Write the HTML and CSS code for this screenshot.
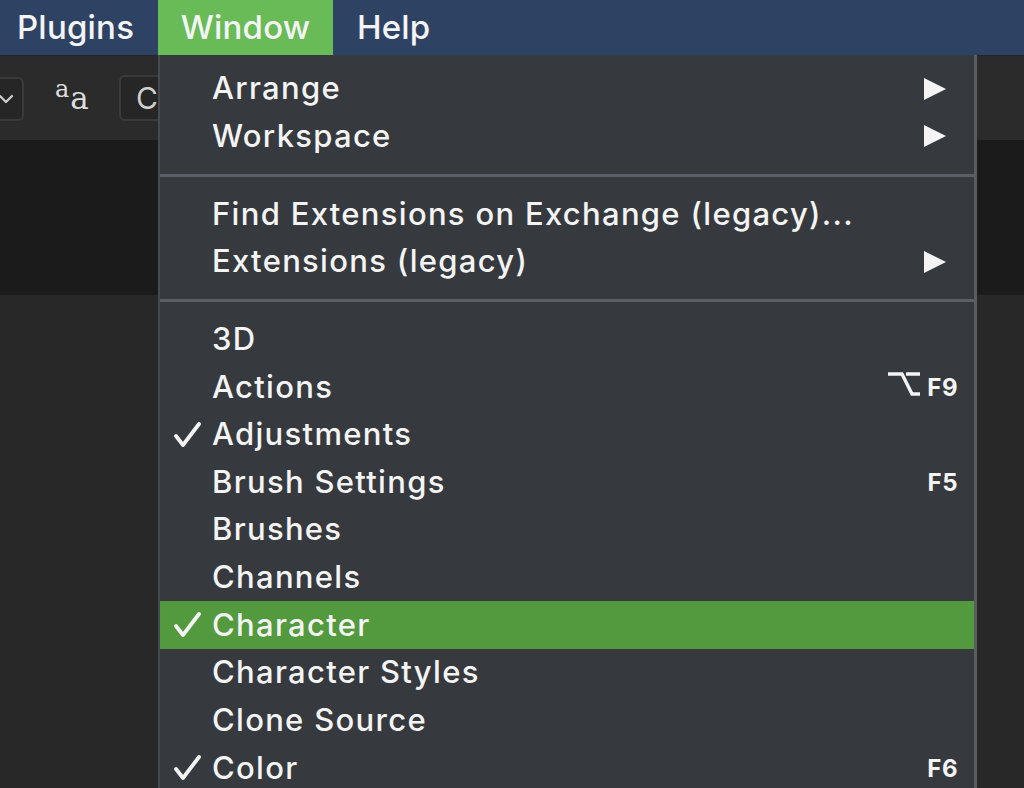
FILE: index.html
```html
<!DOCTYPE html>
<html>
<head>
<meta charset="utf-8">
<link rel="stylesheet" href="styles.css">
</head>
<body>
<div class="screen">
  <div class="menubar">
    <div class="mb-item mb-plugins">Plugins</div>
    <div class="mb-item mb-window">Window</div>
    <div class="mb-item mb-help">Help</div>
  </div>
  <div class="toolbar">
    <div class="tb-select">
      <svg class="chev" width="16" height="10" viewBox="0 0 16 10"><path d="M2 2 L8 8 L14 2" fill="none" stroke="#cfcfcf" stroke-width="2.2" stroke-linecap="round" stroke-linejoin="round"/></svg>
    </div>
    <div class="tb-aa"><span class="aa-small">a</span><span class="aa-big">a</span></div>
    <div class="tb-box">C</div>
  </div>
  <div class="panel-dark"></div>
  <div class="panel-lower"></div>

  <div class="dropdown">
    <div class="section">
      <div class="row"><span class="check"></span><span class="label">Arrange</span><span class="arrow"></span></div>
      <div class="row"><span class="check"></span><span class="label">Workspace</span><span class="arrow"></span></div>
    </div>
    <div class="sep"></div>
    <div class="section">
      <div class="row"><span class="check"></span><span class="label">Find Extensions on Exchange (legacy)...</span></div>
      <div class="row"><span class="check"></span><span class="label">Extensions (legacy)</span><span class="arrow"></span></div>
    </div>
    <div class="sep"></div>
    <div class="section">
      <div class="row"><span class="check"></span><span class="label">3D</span></div>
      <div class="row"><span class="check"></span><span class="label">Actions</span><span class="shortcut"><svg class="opt" width="33" height="24" viewBox="0 0 33 24"><path d="M0 2 H14 L24 22 H32 M18 2 H32" fill="none" stroke="#f4f4f4" stroke-width="3.4" stroke-linejoin="miter"/></svg>F9</span></div>
      <div class="row"><span class="check"><svg width="28" height="26" viewBox="0 0 28 26"><path d="M3 14 L10 23 L26 2" fill="none" stroke="#f4f4f4" stroke-width="3.8" stroke-linecap="round" stroke-linejoin="round"/></svg></span><span class="label">Adjustments</span></div>
      <div class="row"><span class="check"></span><span class="label">Brush Settings</span><span class="shortcut">F5</span></div>
      <div class="row"><span class="check"></span><span class="label">Brushes</span></div>
      <div class="row"><span class="check"></span><span class="label">Channels</span></div>
      <div class="row active"><span class="check"><svg width="28" height="26" viewBox="0 0 28 26"><path d="M3 14 L10 23 L26 2" fill="none" stroke="#f4f4f4" stroke-width="3.8" stroke-linecap="round" stroke-linejoin="round"/></svg></span><span class="label">Character</span></div>
      <div class="row"><span class="check"></span><span class="label">Character Styles</span></div>
      <div class="row"><span class="check"></span><span class="label">Clone Source</span></div>
      <div class="row"><span class="check"><svg width="28" height="26" viewBox="0 0 28 26"><path d="M3 14 L10 23 L26 2" fill="none" stroke="#f4f4f4" stroke-width="3.8" stroke-linecap="round" stroke-linejoin="round"/></svg></span><span class="label">Color</span><span class="shortcut">F6</span></div>
    </div>
  </div>
</div>
</body>
</html>
```
FILE: styles.css
```css
html, body {
  margin: 0;
  padding: 0;
}
body {
  background: #272727;
  font-family: "Inter", "Liberation Sans", sans-serif;
  color: #f4f4f4;
  overflow: hidden;
}
.screen {
  position: relative;
  width: 1024px;
  height: 788px;
  overflow: hidden;
  display: flex;
  flex-direction: column;
}
.menubar {
  height: 55px;
  flex: none;
  background: #2e4364;
  display: flex;
  align-items: stretch;
  font-size: 33px;
  font-weight: 500;
  letter-spacing: 0.2px;
}
.mb-item {
  display: flex;
  align-items: center;
  padding-bottom: 2px;
  box-sizing: border-box;
}
.mb-plugins {
  width: 158px;
  padding-left: 17px;
}
.mb-window {
  width: 175px;
  justify-content: center;
  background: #69bb57;
}
.mb-help {
  padding-left: 24px;
}
.toolbar {
  height: 85px;
  flex: none;
  background: #2b2b2b;
  display: flex;
  align-items: center;
  border-top: 1px solid #252525;
  box-sizing: border-box;
}
.tb-select {
  width: 46px;
  height: 44px;
  margin-left: -22px;
  border: 2px solid #3a3a3a;
  border-radius: 6px;
  background: #262626;
  box-sizing: border-box;
  display: flex;
  align-items: center;
  justify-content: flex-end;
  padding-right: 8px;
  margin-top: 2px;
}
.chev { display: block; }
.tb-aa {
  margin-left: 31px;
  width: 42px;
  display: flex;
  align-items: flex-start;
  color: #dedede;
  font-family: "DejaVu Serif", "Liberation Serif", serif;
  height: 42px;
}
.aa-small {
  font-size: 24px;
  line-height: 24px;
  margin-top: 0px;
}
.aa-big {
  font-size: 31px;
  line-height: 31px;
  margin-top: 6px;
  margin-left: 1px;
}
.tb-box {
  margin-left: 22px;
  width: 60px;
  height: 46px;
  border: 2px solid #3a3a3a;
  border-radius: 6px;
  background: #262626;
  box-sizing: border-box;
  color: #cfcfcf;
  font-size: 30px;
  display: flex;
  align-items: center;
  padding-left: 15px;
}
.panel-dark {
  height: 155px;
  flex: none;
  background: #1b1b1b;
}
.panel-lower {
  flex: 1;
  background: #282828;
}
.dropdown {
  position: absolute;
  left: 158px;
  top: 55px;
  width: 819px;
  height: 760px;
  background: #363a3e;
  border-left: 2px solid #464b51;
  border-right: 3px solid #585d62;
  box-sizing: border-box;
  padding-top: 10px;
  font-size: 31px;
  font-weight: 500;
  letter-spacing: 1.3px;
}
.section {
  display: flex;
  flex-direction: column;
}
.row {
  height: 47.65px;
  display: flex;
  align-items: center;
  position: relative;
}
.row.active {
  background: #53993e;
}
.check {
  width: 52px;
  flex: none;
  display: flex;
  justify-content: flex-end;
  padding-right: 11px;
  box-sizing: border-box;
}
.check svg { display: block; }
.label {
  flex: 1;
  white-space: nowrap;
  padding-bottom: 2px;
}
.arrow {
  width: 0;
  height: 0;
  border-top: 11px solid transparent;
  border-bottom: 11px solid transparent;
  border-left: 22px solid #f4f4f4;
  margin-right: 28px;
}
.shortcut {
  display: flex;
  align-items: center;
  font-weight: 700;
  font-size: 24px;
  letter-spacing: 0.5px;
  margin-right: 16px;
}
.opt {
  display: block;
  margin-right: 6px;
  margin-top: -6px;
}
.sep {
  height: 3px;
  background: #5b6066;
  margin: 13.5px 0;
}
```
